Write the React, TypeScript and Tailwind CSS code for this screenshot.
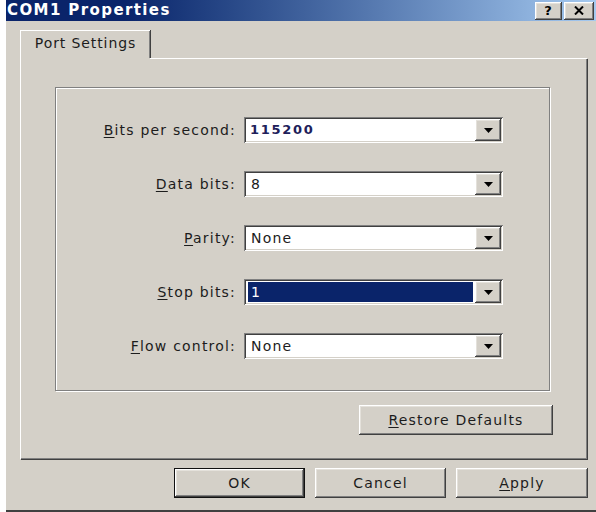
import React from 'react';

const raised =
    'shadow-[inset_-1px_-1px_#404040,inset_1px_1px_#ffffff,inset_-2px_-2px_#808080,inset_2px_2px_#e4e1db]';
const sunken =
    'shadow-[inset_1px_1px_#808080,inset_-1px_-1px_#ffffff,inset_2px_2px_#404040,inset_-2px_-2px_#d4d0c8]';

const ui = "font-['DejaVu_Sans',sans-serif] text-[14px] tracking-[1.2px] text-[#1c1c1c]";

type Row = { key: string; rest: string; value: string; selected?: boolean; bold?: boolean };

const rows: Row[] = [
    { key: 'B', rest: 'its per second:', value: '115200', bold: true },
    { key: 'D', rest: 'ata bits:', value: '8' },
    { key: 'P', rest: 'arity:', value: 'None' },
    { key: 'S', rest: 'top bits:', value: '1', selected: true },
    { key: 'F', rest: 'low control:', value: 'None' },
];

const Arrow = () => (
    <svg width="9" height="5" viewBox="0 0 9 5">
        <path d="M0 0h9L4.5 5z" fill="#000" />
    </svg>
);

const Combo = ({ row }: { row: Row }) => (
    <div className={`relative flex h-[26px] w-[259px] bg-white p-[2px] ${sunken}`}>
        <div className="flex flex-1 items-center pl-[2px] pr-[2px]">
            {row.selected ? (
                <div className="flex h-[20px] flex-1 items-center bg-[#0a246a] pl-[3px] text-white">{row.value}</div>
            ) : row.bold ? (
                <span className="pl-[2px] text-[13px] font-bold tracking-[1.7px] text-[#20205a]">{row.value}</span>
            ) : (
                <span className="pl-[3px]">{row.value}</span>
            )}
        </div>
        <div className={`flex w-[26px] items-center justify-center bg-[#d4d0c8] ${raised}`}>
            <Arrow />
        </div>
    </div>
);

const Button = ({ label, hot, def, className }: { label: string; hot?: number; def?: boolean; className: string }) => (
    <div
        className={`flex items-center justify-center bg-[#d4d0c8] ${def ? 'border border-[#111]' : ''} ${raised} ${className}`}
    >
        {hot === undefined ? (
            label
        ) : (
            <span>
                {label.slice(0, hot)}
                <u className="underline-offset-2">{label[hot]}</u>
                {label.slice(hot + 1)}
            </span>
        )}
    </div>
);

export default function App() {
    return (
        <div className={`h-[512px] w-[596px] overflow-hidden bg-white ${ui}`}>
            <div className="ml-[6px] flex h-[510px] w-[590px] flex-col bg-[#d4d0c8] shadow-[0_2px_#404040]">
                {/* caption */}
                <div className="flex h-[21px] items-center bg-gradient-to-r from-[#0a246a] from-20% to-[#a6caf0] pr-[2px]">
                    <span className="flex-1 pl-[1px] text-[15px] font-bold tracking-[1.4px] text-white">COM1 Properties</span>
                    <div className="flex gap-[2px]">
                        <div className={`flex h-[18px] w-[27px] items-center justify-center bg-[#d4d0c8] text-[13px] font-bold text-black ${raised}`}>
                            ?
                        </div>
                        <div className={`flex h-[18px] w-[30px] items-center justify-center bg-[#d4d0c8] text-[13px] font-bold text-black ${raised}`}>
                            <svg width="10" height="9" viewBox="0 0 10 9">
                                <path d="M1 0.5l8 8M9 0.5l-8 8" stroke="#000" strokeWidth="2" />
                            </svg>
                        </div>
                    </div>
                </div>

                {/* tab strip */}
                <div className="ml-[14px] mt-[9px] flex h-[28px]">
                    <div className="relative z-10 flex w-[130px] items-center justify-center border-l border-t border-white pb-[2px] tracking-[0.9px] shadow-[inset_-1px_0_#808080,1px_0_#404040]">
                        Port Settings
                    </div>
                </div>

                {/* tab page */}
                <div className="relative ml-[14px] flex h-[401px] w-[567px] flex-col border-l border-t border-white shadow-[inset_-1px_-1px_#808080,1px_1px_#404040]">
                    <div className="absolute -top-px left-0 h-[2px] w-[129px] bg-[#d4d0c8]" />
                    <div className="ml-[34px] mt-[28px] flex h-[304px] w-[495px] flex-col gap-[28px] border border-[#808080] pt-[29px] shadow-[1px_1px_#ffffff,inset_1px_1px_#ffffff]">
                        {rows.map((r) => (
                            <div key={r.key} className="flex items-center">
                                <div className="w-[188px] pr-[8px] text-right">
                                    <u className="underline-offset-2">{r.key}</u>
                                    {r.rest}
                                </div>
                                <Combo row={r} />
                            </div>
                        ))}
                    </div>
                    <div className="mt-[14px] flex justify-end pr-[34px]">
                        <Button label="Restore Defaults" hot={0} className="h-[30px] w-[194px]" />
                    </div>
                </div>

                {/* dialog buttons */}
                <div className="mt-[9px] flex gap-[10px] pl-[168px]">
                    <Button label="OK" def className="h-[30px] w-[131px]" />
                    <Button label="Cancel" className="h-[30px] w-[131px]" />
                    <Button label="Apply" hot={0} className="h-[30px] w-[132px]" />
                </div>
            </div>
        </div>
    );
}
